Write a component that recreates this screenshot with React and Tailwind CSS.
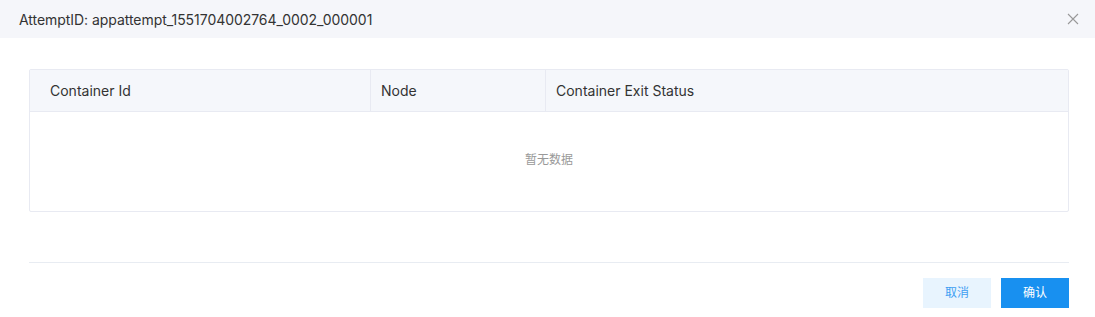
import React from "react";

export default function App() {
  return (
    <div
      className="w-[1095px] h-[317px] bg-white text-[#333] overflow-hidden"
      style={{ fontFamily: 'Inter, "Noto Sans CJK SC", sans-serif' }}
    >
      {/* Header */}
      <div className="h-[38px] bg-[#f5f6fa] flex items-center justify-between pl-[19px] pr-[16px]">
        <span className="text-[14px] text-[#333] tracking-[-0.05px]">
          AttemptID: appattempt_1551704002764_0002_000001
        </span>
        <svg width="12" height="12" viewBox="0 0 12 12" className="text-[#999]">
          <path d="M1 1L11 11M11 1L1 11" stroke="currentColor" strokeWidth="1.1" />
        </svg>
      </div>

      {/* Body */}
      <div className="pl-[29px] pr-[26px] pt-[31px]">
        <div className="border border-[#e8eaf2] rounded-[2px]">
          <div className="flex h-[42px] bg-[#f5f7fb] border-b border-[#e8eaf2] text-[14px] text-[#333]">
            <div className="w-[341px] flex items-center pl-[20px] border-r border-[#e8eaf2]">
              Container Id
            </div>
            <div className="w-[175px] flex items-center pl-[10px] border-r border-[#e8eaf2]">
              Node
            </div>
            <div className="flex-1 flex items-center pl-[10px]">Container Exit Status</div>
          </div>
          <div className="h-[99px] flex items-center justify-center text-[12px] text-[#999] pb-[4px]">
            暂无数据
          </div>
        </div>
      </div>

      {/* Footer */}
      <div className="ml-[29px] mr-[26px] mt-[50px] border-t border-[#e8ecf2]" />
      <div className="flex justify-end gap-[10px] px-[26px] pt-[15px]">
        <button className="w-[68px] h-[30px] bg-[#e8f4fe] text-[#3d9ef2] text-[12px]">取消</button>
        <button className="w-[68px] h-[30px] bg-[#1890f0] text-white text-[12px]">确认</button>
      </div>
    </div>
  );
}
